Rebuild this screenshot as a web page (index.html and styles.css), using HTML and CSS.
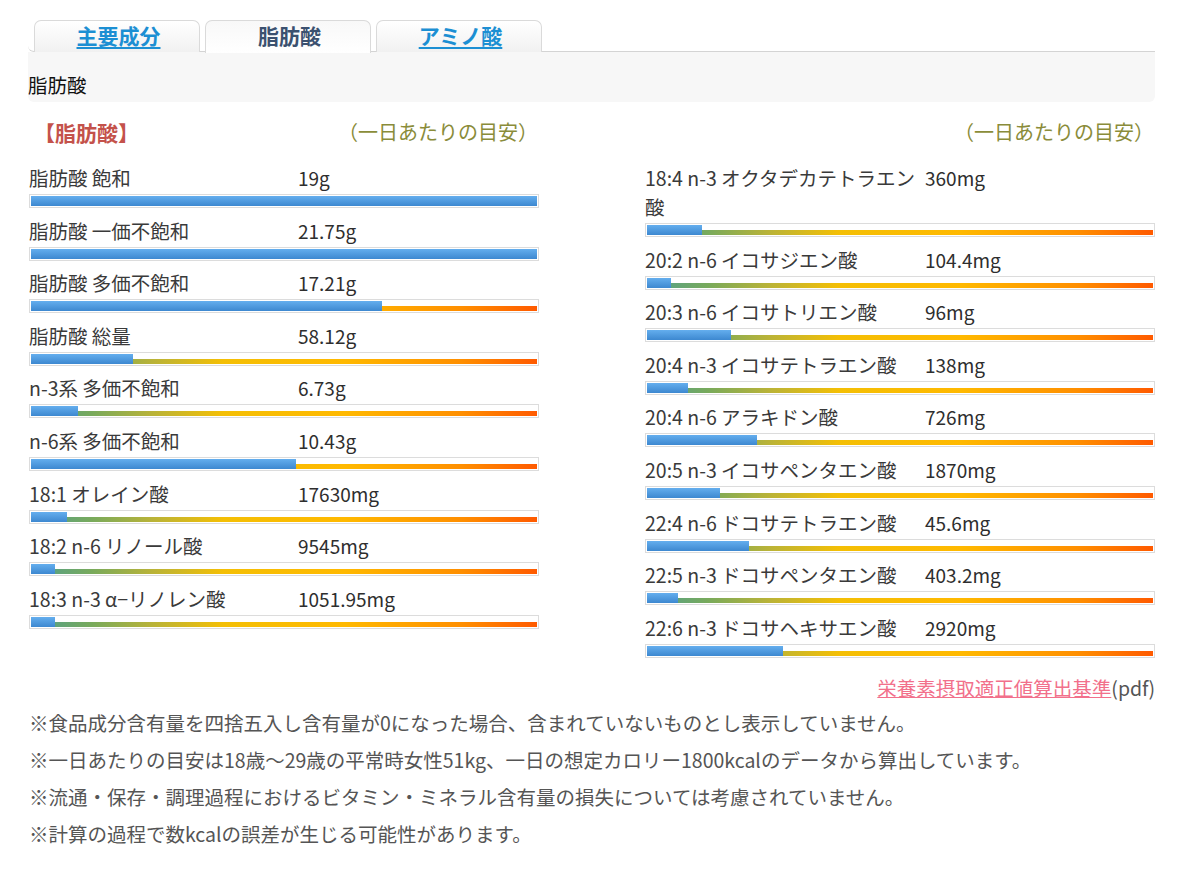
FILE: index.html
```html
<!DOCTYPE html>
<html lang="ja">
<head>
<meta charset="utf-8">
<title>脂肪酸</title>
<link rel="stylesheet" href="styles.css">
</head>
<body>
<div class="wrap">
  <ul class="tabs">
    <li class="tab"><a href="#">主要成分</a></li>
    <li class="tab active"><span>脂肪酸</span></li>
    <li class="tab"><a href="#">アミノ酸</a></li>
  </ul>
  <div class="panel">脂肪酸</div>

  <div class="cols">
    <div class="col col-left">
      <div class="col-head"><span class="title">【脂肪酸】</span><span class="note">（一日あたりの目安）</span></div>
      <div class="row"><div class="line"><span class="label">脂肪酸 飽和</span><span class="val">19g</span></div><div class="bar"><div class="fill" style="width:100%"></div></div></div>
      <div class="row"><div class="line"><span class="label">脂肪酸 一価不飽和</span><span class="val">21.75g</span></div><div class="bar"><div class="fill" style="width:100%"></div></div></div>
      <div class="row"><div class="line"><span class="label">脂肪酸 多価不飽和</span><span class="val">17.21g</span></div><div class="bar"><div class="fill" style="width:69.4%"></div></div></div>
      <div class="row"><div class="line"><span class="label">脂肪酸 総量</span><span class="val">58.12g</span></div><div class="bar"><div class="fill" style="width:20.2%"></div></div></div>
      <div class="row"><div class="line"><span class="label">n-3系 多価不飽和</span><span class="val">6.73g</span></div><div class="bar"><div class="fill" style="width:9.3%"></div></div></div>
      <div class="row"><div class="line"><span class="label">n-6系 多価不飽和</span><span class="val">10.43g</span></div><div class="bar"><div class="fill" style="width:52.4%"></div></div></div>
      <div class="row"><div class="line"><span class="label">18:1 オレイン酸</span><span class="val">17630mg</span></div><div class="bar"><div class="fill" style="width:7.1%"></div></div></div>
      <div class="row"><div class="line"><span class="label">18:2 n-6 リノール酸</span><span class="val">9545mg</span></div><div class="bar"><div class="fill" style="width:4.7%"></div></div></div>
      <div class="row"><div class="line"><span class="label">18:3 n-3 α−リノレン酸</span><span class="val">1051.95mg</span></div><div class="bar"><div class="fill" style="width:4.7%"></div></div></div>
    </div>
    <div class="col col-right">
      <div class="col-head"><span class="title"></span><span class="note">（一日あたりの目安）</span></div>
      <div class="row"><div class="line"><span class="label">18:4 n-3 オクタデカテトラエン<br>酸</span><span class="val">360mg</span></div><div class="bar"><div class="fill" style="width:10.9%"></div></div></div>
      <div class="row"><div class="line"><span class="label">20:2 n-6 イコサジエン酸</span><span class="val">104.4mg</span></div><div class="bar"><div class="fill" style="width:4.7%"></div></div></div>
      <div class="row"><div class="line"><span class="label">20:3 n-6 イコサトリエン酸</span><span class="val">96mg</span></div><div class="bar"><div class="fill" style="width:16.6%"></div></div></div>
      <div class="row"><div class="line"><span class="label">20:4 n-3 イコサテトラエン酸</span><span class="val">138mg</span></div><div class="bar"><div class="fill" style="width:8.1%"></div></div></div>
      <div class="row"><div class="line"><span class="label">20:4 n-6 アラキドン酸</span><span class="val">726mg</span></div><div class="bar"><div class="fill" style="width:21.7%"></div></div></div>
      <div class="row"><div class="line"><span class="label">20:5 n-3 イコサペンタエン酸</span><span class="val">1870mg</span></div><div class="bar"><div class="fill" style="width:14.4%"></div></div></div>
      <div class="row"><div class="line"><span class="label">22:4 n-6 ドコサテトラエン酸</span><span class="val">45.6mg</span></div><div class="bar"><div class="fill" style="width:20.2%"></div></div></div>
      <div class="row"><div class="line"><span class="label">22:5 n-3 ドコサペンタエン酸</span><span class="val">403.2mg</span></div><div class="bar"><div class="fill" style="width:6.1%"></div></div></div>
      <div class="row"><div class="line"><span class="label">22:6 n-3 ドコサヘキサエン酸</span><span class="val">2920mg</span></div><div class="bar"><div class="fill" style="width:26.9%"></div></div></div>
    </div>
  </div>

  <p class="pdf"><a href="#">栄養素摂取適正値算出基準</a>(pdf)</p>

  <div class="notes">
    <p>※食品成分含有量を四捨五入し含有量が0になった場合、含まれていないものとし表示していません。</p>
    <p>※一日あたりの目安は18歳～29歳の平常時女性51kg、一日の想定カロリー1800kcalのデータから算出しています。</p>
    <p>※流通・保存・調理過程におけるビタミン・ミネラル含有量の損失については考慮されていません。</p>
    <p>※計算の過程で数kcalの誤差が生じる可能性があります。</p>
  </div>
</div>
</body>
</html>
```

FILE: styles.css
```css
* { box-sizing: border-box; }
html, body { margin: 0; padding: 0; background: #fff; }
body {
  font-family: "Noto Sans CJK JP", "Noto Sans", sans-serif;
  color: #333;
  font-size: 19.5px;
}
.wrap {
  width: 1155px;
  padding-left: 28px;
}
.tabs {
  list-style: none;
  margin: 0;
  padding: 20px 0 0 6px;
  display: flex;
  gap: 5px;
  border-bottom: 1px solid #d4d4d4;
  border-bottom-left-radius: 6px;
  height: 52px;
}
.tab {
  width: 166px;
  height: 32px;
  border: 1px solid #dadada;
  border-bottom: none;
  border-radius: 7px 7px 0 0;
  background: linear-gradient(#ffffff, #f1f1f1);
  text-align: center;
  font-size: 21px;
  font-weight: bold;
  line-height: 28px;
  padding-left: 3px;
}
.tab a { color: #1c8fd3; text-decoration: underline; text-underline-offset: 3px; }
.tab.active {
  height: 33px;
  margin-bottom: -1px;
  background: linear-gradient(#f8f8f8, #ffffff);
  color: #3b5170;
  position: relative;
}
.panel {
  background: #f7f7f7;
  height: 50px;
  padding: 20px 0 0 0;
  line-height: 26px;
  font-size: 19.5px;
  color: #111;
  border-radius: 0 0 6px 6px;
}
.cols {
  display: grid;
  grid-template-columns: 510px 510px;
  column-gap: 106px;
  padding-left: 1px;
  align-items: start;
}
.col-head {
  display: flex;
  justify-content: space-between;
  margin: 15px 0 16px;
  line-height: 30px;
  font-size: 20px;
  padding-right: 1px;
}
.col-head .title { color: #c4524b; font-weight: bold; font-size: 21px; margin-left: 5px; }
.col-head .note { color: #8a8c3a; }
.row { margin-bottom: 7.6px; }
.line {
  display: grid;
  line-height: 29px;
  font-size: 19.5px;
}
.col-left .line { grid-template-columns: 269px 1fr; }
.col-right .line { grid-template-columns: 280px 1fr; }
.label { color: #3a3a3a; }
.val { color: #2e2e2e; font-size: 19px; }
.bar {
  margin-top: 2px;
  height: 14px;
  border: 1px solid #dcdcdc;
  padding: 1px;
  background: #fff;
  position: relative;
}
.bar::before {
  content: "";
  position: absolute;
  left: 1px; right: 1px; bottom: 1px;
  height: 5px;
  background: linear-gradient(to right, #4f9f90 0%, #78aa5c 12%, #b9b338 24%, #f4bf05 38%, #ffb900 62%, #ff8f00 85%, #ff5a00 100%);
}
.fill {
  position: relative;
  height: 10px;
  background: linear-gradient(#64aeee, #3d88d0);
}
.pdf {
  margin: 9px 0 0;
  text-align: right;
  line-height: 28px;
  font-size: 19.5px;
  color: #555;
}
.pdf a { color: #f2708b; text-decoration: underline; }
.notes { padding-left: 1px; margin-top: 2px; }
.notes p {
  margin: 0;
  line-height: 37px;
  font-size: 19.5px;
  color: #555;
}
```
